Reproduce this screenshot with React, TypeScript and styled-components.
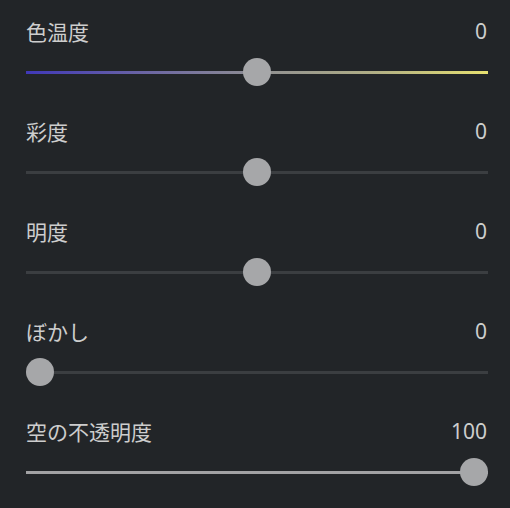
import React from 'react';
import styled, { createGlobalStyle } from 'styled-components';

const GlobalStyle = createGlobalStyle`
  html, body {
    margin: 0;
    padding: 0;
    background: #222528;
  }
  body {
    font-family: "Noto Sans CJK JP", "Noto Sans", sans-serif;
  }
`;

const THUMB = 28;

const Panel = styled.div`
  width: 510px;
  height: 508px;
  box-sizing: border-box;
  padding: 0 22px 0 26px;
  background: #222528;
  display: flex;
  flex-direction: column;
  overflow: hidden;
`;

const Row = styled.div`
  height: 100px;
  box-sizing: border-box;
  padding-top: 16px;
  display: flex;
  flex-direction: column;
`;

const Header = styled.div`
  display: flex;
  justify-content: space-between;
  align-items: center;
  height: 30px;
  font-size: 21px;
  line-height: 30px;
  color: #cdcdcd;
`;

const Value = styled.span`
  padding-right: 1px;
  font-family: "Noto Sans", "Roboto", sans-serif;
  font-size: 21px;
`;

const SliderArea = styled.div`
  position: relative;
  height: ${THUMB}px;
  margin-top: 12px;
  display: flex;
  align-items: center;
`;

const Track = styled.div<{ $gradient?: boolean; $fill: number }>`
  width: 100%;
  height: 3px;
  background: ${(p) =>
    p.$gradient
      ? 'linear-gradient(90deg, #4038b8 0%, #6a64a4 25%, #8e8e92 50%, #b0ae86 75%, #e6e070 100%)'
      : `linear-gradient(90deg, #a2a2a4 0 ${p.$fill}%, #3b3e41 ${p.$fill}% 100%)`};
`;

const Thumb = styled.div`
  position: absolute;
  top: 0;
  width: ${THUMB}px;
  height: ${THUMB}px;
  border-radius: 50%;
  background: #a6a7a9;
`;

type Item = { label: string; value: number; min: number; max: number; gradient?: boolean; fill?: boolean };

const items: Item[] = [
  { label: '色温度', value: 0, min: -100, max: 100, gradient: true },
  { label: '彩度', value: 0, min: -100, max: 100 },
  { label: '明度', value: 0, min: -100, max: 100 },
  { label: 'ぼかし', value: 0, min: 0, max: 100 },
  { label: '空の不透明度', value: 100, min: 0, max: 100, fill: true },
];

const Slider = ({ item }: { item: Item }) => {
  const pct = (item.value - item.min) / (item.max - item.min);
  return (
    <SliderArea>
      <Track $gradient={item.gradient} $fill={item.fill ? pct * 100 : 0} />
      <Thumb style={{ left: `calc(${pct} * (100% - ${THUMB}px))` }} />
    </SliderArea>
  );
};

const App = () => (
  <>
    <GlobalStyle />
    <Panel>
      {items.map((item) => (
        <Row key={item.label}>
          <Header>
            <span>{item.label}</span>
            <Value>{item.value}</Value>
          </Header>
          <Slider item={item} />
        </Row>
      ))}
    </Panel>
  </>
);

export default App;
